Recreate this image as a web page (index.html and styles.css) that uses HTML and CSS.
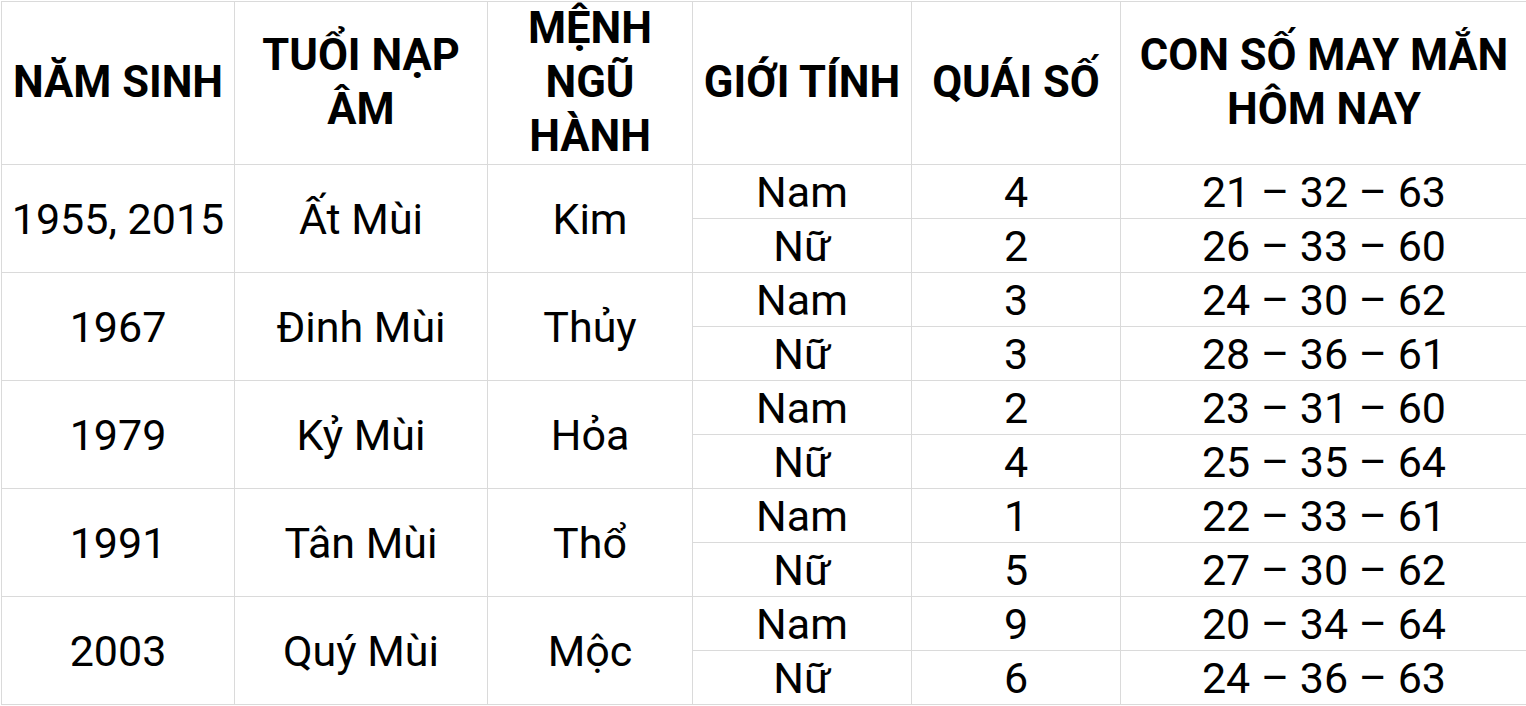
FILE: index.html
```html
<!DOCTYPE html>
<html lang="vi">
<head>
<meta charset="utf-8">
<link rel="stylesheet" href="styles.css">
</head>
<body>
<table class="lucky">
  <colgroup>
    <col class="c1"><col class="c2"><col class="c3"><col class="c4"><col class="c5"><col class="c6">
  </colgroup>
  <thead>
    <tr class="head">
      <th>NĂM SINH</th>
      <th>TUỔI NẠP<br>ÂM</th>
      <th>MỆNH<br>NGŨ<br>HÀNH</th>
      <th>GIỚI TÍNH</th>
      <th>QUÁI SỐ</th>
      <th>CON SỐ MAY MẮN<br>HÔM NAY</th>
    </tr>
  </thead>
  <tbody>
    <tr><td rowspan="2">1955, 2015</td><td rowspan="2">Ất Mùi</td><td rowspan="2">Kim</td><td>Nam</td><td>4</td><td>21 – 32 – 63</td></tr>
    <tr><td>Nữ</td><td>2</td><td>26 – 33 – 60</td></tr>
    <tr><td rowspan="2">1967</td><td rowspan="2">Đinh Mùi</td><td rowspan="2">Thủy</td><td>Nam</td><td>3</td><td>24 – 30 – 62</td></tr>
    <tr><td>Nữ</td><td>3</td><td>28 – 36 – 61</td></tr>
    <tr><td rowspan="2">1979</td><td rowspan="2">Kỷ Mùi</td><td rowspan="2">Hỏa</td><td>Nam</td><td>2</td><td>23 – 31 – 60</td></tr>
    <tr><td>Nữ</td><td>4</td><td>25 – 35 – 64</td></tr>
    <tr><td rowspan="2">1991</td><td rowspan="2">Tân Mùi</td><td rowspan="2">Thổ</td><td>Nam</td><td>1</td><td>22 – 33 – 61</td></tr>
    <tr><td>Nữ</td><td>5</td><td>27 – 30 – 62</td></tr>
    <tr><td rowspan="2">2003</td><td rowspan="2">Quý Mùi</td><td rowspan="2">Mộc</td><td>Nam</td><td>9</td><td>20 – 34 – 64</td></tr>
    <tr><td>Nữ</td><td>6</td><td>24 – 36 – 63</td></tr>
  </tbody>
</table>
</body>
</html>
```

FILE: styles.css
```css
html, body {
  margin: 0;
  padding: 0;
  background: #ffffff;
  overflow: hidden;
}
body {
  padding: 1px 0 0 1px;
  font-family: Roboto, "Liberation Sans", sans-serif;
  color: #000000;
}
.lucky {
  border-collapse: collapse;
  table-layout: fixed;
  width: 1526px;
}
.c1 { width: 233px; }
.c2 { width: 253px; }
.c3 { width: 205px; }
.c4 { width: 219px; }
.c5 { width: 209px; }
.c6 { width: 407px; }
.lucky th,
.lucky td {
  border: 1px solid #dadada;
  padding: 0;
  text-align: center;
  vertical-align: middle;
  white-space: nowrap;
}
.lucky th {
  font-size: 43.5px;
  font-weight: 700;
  line-height: 54px;
  height: 162px;
}
.lucky td {
  font-size: 43px;
  font-weight: 400;
  line-height: 48px;
  height: 53px;
}
```
